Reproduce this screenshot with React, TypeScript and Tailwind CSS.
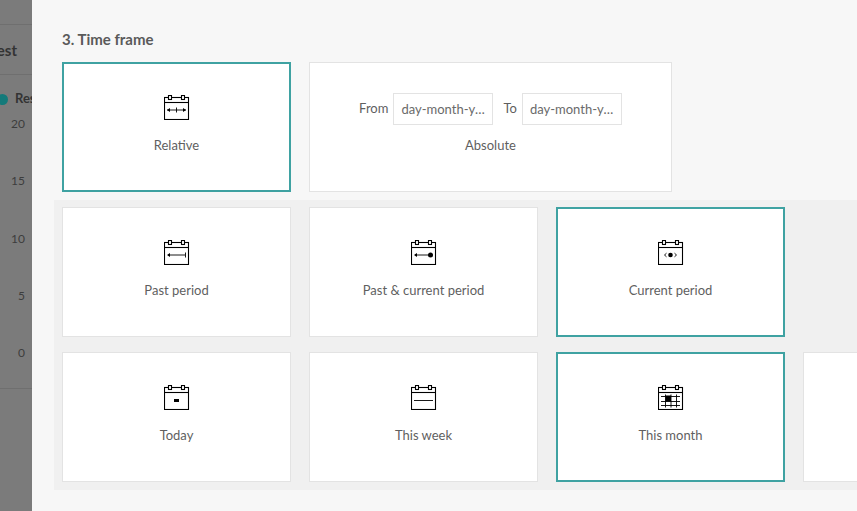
const font = { fontFamily: 'Lato, sans-serif' }

type Mark = 'relative' | 'past' | 'pastCurrent' | 'current' | 'today' | 'week' | 'month'

function CalendarIcon({ mark }: { mark: Mark }) {
  return (
    <svg width="26" height="25" viewBox="0 0 26 25" fill="none" stroke="#000" strokeWidth="1.1">
      <rect x="0.5" y="2.5" width="24" height="22" />
      <line x1="0.5" y1="7.5" x2="24.5" y2="7.5" />
      <rect x="4.5" y="0.5" width="3" height="4" fill="#fff" />
      <rect x="17.5" y="0.5" width="3" height="4" fill="#fff" />
      {mark === 'relative' && (
        <>
          <line x1="3" y1="15" x2="22" y2="15" strokeWidth="0.9" />
          <line x1="12.5" y1="12.5" x2="12.5" y2="17.5" strokeWidth="0.9" />
          <path d="M3 15l3-2v4zM22 15l-3-2v4z" fill="#000" stroke="none" />
        </>
      )}
      {mark === 'past' && (
        <>
          <line x1="4" y1="15" x2="21" y2="15" strokeWidth="0.9" />
          <line x1="21.5" y1="12.5" x2="21.5" y2="17.5" strokeWidth="0.9" />
          <path d="M3 15l3-2v4z" fill="#000" stroke="none" />
        </>
      )}
      {mark === 'pastCurrent' && (
        <>
          <line x1="4" y1="15" x2="19" y2="15" strokeWidth="0.9" />
          <path d="M3 15l3-2v4z" fill="#000" stroke="none" />
          <circle cx="19.5" cy="15" r="2.5" fill="#000" stroke="none" />
        </>
      )}
      {mark === 'current' && (
        <>
          <circle cx="12.5" cy="15" r="2.3" fill="#000" stroke="none" />
          <path d="M8.5 13.2l-2 1.8 2 1.8M16.5 13.2l2 1.8-2 1.8" strokeWidth="0.9" />
        </>
      )}
      {mark === 'today' && <rect x="10" y="14" width="5" height="3" fill="#000" stroke="none" />}
      {mark === 'week' && <line x1="3" y1="15.5" x2="22" y2="15.5" strokeWidth="0.9" />}
      {mark === 'month' && (
        <>
          <path d="M3 11.5h19M3 16.5h19M3 20.5h19M7.5 9.5v13M13 9.5v13M18.5 9.5v13" strokeWidth="0.9" />
          <rect x="7.5" y="10.5" width="5.5" height="6" fill="#000" stroke="none" />
        </>
      )}
    </svg>
  )
}

function Card({ label, mark, selected }: { label: string; mark: Mark; selected?: boolean }) {
  return (
    <div
      className={`w-[229px] h-[130px] shrink-0 bg-white flex flex-col items-center ${
        selected ? 'border-2 border-[#3fa2a2] pt-[31px]' : 'border border-[#e3e3e3] pt-[32px]'
      }`}
    >
      <CalendarIcon mark={mark} />
      <p className="mt-[15px] text-[13px] leading-5 text-[#5f5f5f]">{label}</p>
    </div>
  )
}

function DateInput() {
  return (
    <input
      readOnly
      placeholder="day-month-year"
      className="w-[100px] h-[32px] border border-[#e3e3e3] px-[7px] text-[13px] text-ellipsis placeholder:text-[#6a6a6a] outline-none"
      style={font}
    />
  )
}

export default function App() {
  return (
    <div className="w-[857px] h-[511px] flex overflow-hidden bg-[#f7f7f7]" style={font}>
      {/* dimmed page behind the panel */}
      <div className="w-[32px] shrink-0 overflow-hidden bg-[#7b7b7b] text-[#333]">
        <div className="mt-[24px] h-[51px] border-y border-[#6f6f6f] flex items-center justify-end pr-[15px] pt-[2px] text-[15px] font-bold whitespace-nowrap">
          est
        </div>
        <div className="mt-[14px] h-5 flex items-center gap-[7px] -ml-[3px] text-[13px] font-bold whitespace-nowrap">
          <span className="w-[11px] h-[11px] rounded-full bg-[#147a7a] shrink-0" />
          <span className="w-[17px] overflow-hidden">Result</span>
        </div>
        <div className="mt-[5px] pr-[7px] flex flex-col gap-[37.25px] items-end text-xs leading-5 text-[#3d3d3d]">
          <span>20</span>
          <span>15</span>
          <span>10</span>
          <span>5</span>
          <span>0</span>
        </div>
        <div className="mt-[25px] border-t border-[#6f6f6f]" />
      </div>

      {/* time frame panel */}
      <div className="flex-1 min-w-0 pl-[30px] overflow-hidden">
        <h2 className="mt-[29px] h-5 text-[15px] leading-5 font-bold text-[#5a5a5a]">3. Time frame</h2>
        <div className="mt-[13px] flex gap-[18px]">
          <Card label="Relative" mark="relative" selected />
          <div className="w-[363px] h-[130px] bg-white border border-[#e3e3e3] pt-[30px] flex flex-col items-center">
            <div className="flex items-center text-[13px] text-[#5f5f5f]">
              <span className="mr-[5px]">From</span>
              <DateInput />
              <span className="ml-[10px] mr-[5px]">To</span>
              <DateInput />
            </div>
            <p className="mt-[10px] text-[13px] leading-5 text-[#5f5f5f]">Absolute</p>
          </div>
        </div>
        <div className="mt-[8px] -ml-[8px] pl-[8px] pt-[7px] pb-[8px] bg-[#f0f0f0] flex flex-col gap-[15px]">
          <div className="flex gap-[18px]">
            <Card label="Past period" mark="past" />
            <Card label="Past & current period" mark="pastCurrent" />
            <Card label="Current period" mark="current" selected />
          </div>
          <div className="flex gap-[18px]">
            <Card label="Today" mark="today" />
            <Card label="This week" mark="week" />
            <Card label="This month" mark="month" selected />
            <div className="w-[229px] h-[130px] shrink-0 bg-white border border-[#e3e3e3]" />
          </div>
        </div>
      </div>
    </div>
  )
}
